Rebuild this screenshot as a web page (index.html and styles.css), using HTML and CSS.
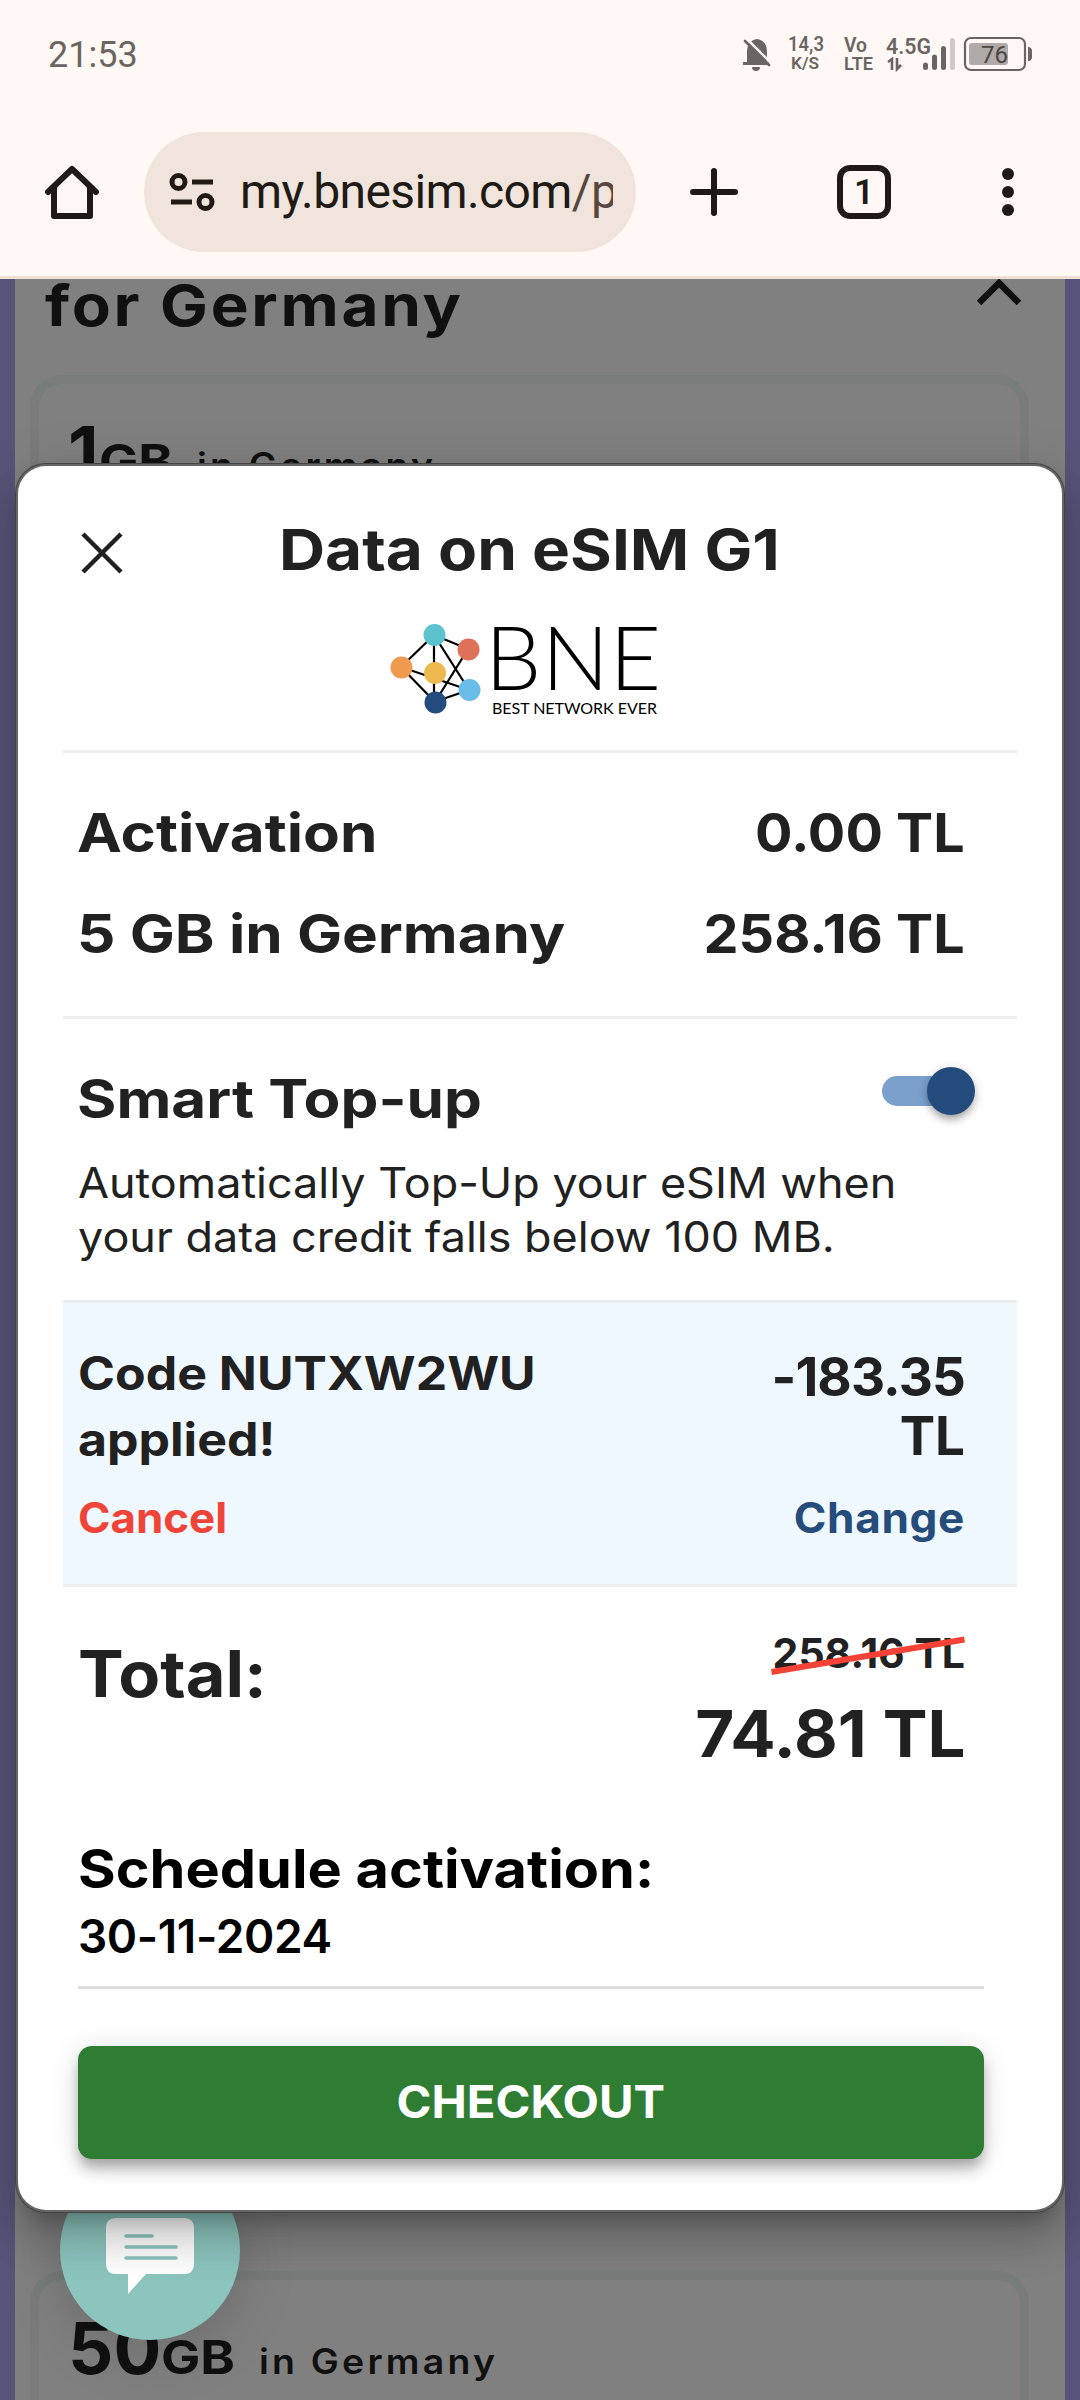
FILE: index.html
```html
<!DOCTYPE html>
<html lang="en">
<head>
  <meta charset="UTF-8">
  <title>Data on eSIM G1</title>
  <link rel="stylesheet" href="styles.css">
</head>
<body>

  <header class="phone-top">
    <div class="status-bar">
      <span class="clock">21:53</span>
      <svg class="status-icons" viewBox="736 30 304 48" width="304" height="48">
        <g fill="#6b6562">
          <path d="M747 63V52c0-8 4-12 10-13 7 1 10 6 10 13v11z"/>
          <path d="M743 62h26v3h-26zM752 67h8c0 3-2 4-4 4s-4-1-4-4z"/>
        </g>
        <path d="M747 39L771 63" stroke="#fff8f5" stroke-width="2.500"/>
        <path d="M745 41L769 65" stroke="#6b6562" stroke-width="2.600" stroke-linecap="round"/>
        <g class="tiny">
          <text x="788" y="51" font-size="21" textLength="36" lengthAdjust="spacingAndGlyphs">14,3</text>
          <text x="791" y="69" font-size="17" textLength="28" lengthAdjust="spacingAndGlyphs">K/S</text>
          <text x="844" y="52" font-size="20" textLength="23" lengthAdjust="spacingAndGlyphs">Vo</text>
          <text x="844" y="70" font-size="19" textLength="29" lengthAdjust="spacingAndGlyphs">LTE</text>
          <text x="886" y="54" font-size="22" textLength="45" lengthAdjust="spacingAndGlyphs">4.5G</text>
        </g>
        <path d="M888 62l4-3v11M897 58v11l4-4" fill="none" stroke="#6b6562" stroke-width="2.600"/>
        <g stroke="#6b6562" stroke-width="5" stroke-linecap="round">
          <path d="M925.500 65V67.500M934.500 57V67.500M943.500 48.500V67.500"/>
          <path d="M952.500 40.500V67.500" stroke="#d0cac7"/>
        </g>
        <rect x="965" y="38" width="60" height="32" rx="6" fill="none" stroke="#6b6562" stroke-width="2.200"/>
        <rect x="969" y="43" width="39" height="22" rx="3" fill="#b0aba8"/>
        <path d="M1028 47c3 0 4 2 4 4v6c0 2-1 4-4 4z" fill="#6b6562"/>
        <text class="level" x="981" y="63" textLength="27" lengthAdjust="spacingAndGlyphs">76</text>
      </svg>
    </div>
    <div class="toolbar">
      <svg class="home" viewBox="0 0 54 54" width="54" height="54">
        <path d="M3 27L27 4L51 27M9 22V51H45V22" fill="none" stroke="#201a17" stroke-width="6" stroke-linejoin="round" stroke-linecap="round"/>
      </svg>
      <div class="address">
        <svg class="tune" viewBox="0 0 46 38" width="46" height="38">
          <g fill="none" stroke="#201a17" stroke-width="5">
            <circle cx="9.500" cy="9" r="6.500"/>
            <circle cx="36.500" cy="29" r="6.500"/>
            <path d="M23 9H44M2 29H23"/>
          </g>
        </svg>
        <span class="url">my.bnesim.com<span class="url-path">/p</span></span>
      </div>
      <svg class="plus" viewBox="0 0 48 48" width="48" height="48">
        <path d="M24 3V45M3 24H45" stroke="#201a17" stroke-width="6" stroke-linecap="round"/>
      </svg>
      <div class="tabs">1</div>
      <svg class="dots" viewBox="0 0 12 48" width="12" height="48" fill="#201a17">
        <circle cx="6" cy="6" r="6"/><circle cx="6" cy="24" r="6"/><circle cx="6" cy="42" r="6"/>
      </svg>
    </div>
  </header>

  <main class="viewport">
    <div class="page">
      <div class="group-head">
        <span class="group-name">for Germany</span>
        <svg class="chevron" viewBox="0 0 46 30" width="46" height="30">
          <path d="M3 24L23 4L43 24" fill="none" stroke="#101010" stroke-width="6.500"/>
        </svg>
      </div>
      <div class="plan plan-first">
        <span class="amount">1</span><span class="unit">GB</span><span class="region">in Germany</span>
      </div>
      <div class="plan">
        <span class="amount">50</span><span class="unit">GB</span><span class="region">in Germany</span>
      </div>
    </div>

    <div class="chat">
      <svg viewBox="0 0 88 76" width="88" height="76">
        <path d="M10 0H78Q88 0 88 10V46Q88 56 78 56H40L22 76V56H10Q0 56 0 46V10Q0 0 10 0Z" fill="#fff"/>
        <path d="M20 18H46M20 29H70M20 40H70" stroke="#8cc5be" stroke-width="3.500" stroke-linecap="round"/>
      </svg>
    </div>

    <section class="dialog">
      <div class="dialog-head">
        <svg class="close" viewBox="0 0 42 42" width="42" height="42">
          <path d="M2 2L40 40M40 2L2 40" stroke="#202020" stroke-width="4.500"/>
        </svg>
        <h1>Data on eSIM G1</h1>
      </div>

      <svg class="logo" viewBox="0 0 320 130" width="320" height="130">
        <path d="M31 67L64 35L98 49L65 102L31 67L99 90L64 35V102L99 90" fill="none" stroke="#000" stroke-width="2.200"/>
        <circle cx="64.500" cy="35" r="11" fill="#5cc2cd"/>
        <circle cx="98.500" cy="49.500" r="11" fill="#df7059"/>
        <circle cx="31.500" cy="67.500" r="11" fill="#f09a50"/>
        <circle cx="65" cy="73" r="11" fill="#eeba50"/>
        <circle cx="99.500" cy="90" r="11" fill="#6abce9"/>
        <circle cx="65.500" cy="102.500" r="11" fill="#234b7d"/>
        <text class="logo-name" x="115" y="90" textLength="176">BNE</text>
        <text class="logo-tag" x="122" y="114" textLength="165">BEST NETWORK EVER</text>
      </svg>

      <div class="block items">
        <div class="row"><span class="label">Activation</span><span class="price">0.00 TL</span></div>
        <div class="row"><span class="label">5 GB in Germany</span><span class="price">258.16 TL</span></div>
      </div>

      <div class="block topup">
        <div class="topup-head">
          <span class="label">Smart Top-up</span>
          <span class="switch"><span class="thumb"></span></span>
        </div>
        <p>Automatically Top-Up your eSIM when<br>your data credit falls below 100 MB.</p>
      </div>

      <div class="block promo">
        <div class="promo-row">
          <span class="promo-code">Code NUTXW2WU<br>applied!</span>
          <span class="promo-value"><span class="discount">-183.35</span><br>TL</span>
        </div>
        <div class="promo-actions">
          <span class="cancel">Cancel</span>
          <span class="change">Change</span>
        </div>
      </div>

      <div class="block total">
        <span class="total-label">Total:</span>
        <div class="total-prices">
          <span class="old-price">258.16 TL
            <svg class="strike" viewBox="0 0 194 40" width="194" height="40">
              <path d="M0.500 36L193.500 3.500" stroke="#f44336" stroke-width="6"/>
            </svg>
          </span>
          <span class="new-price">74.81 TL</span>
        </div>
      </div>

      <div class="schedule">
        <div class="schedule-label">Schedule activation:</div>
        <div class="schedule-date">30-11-2024</div>
      </div>

      <button class="checkout"><span class="checkout-text">CHECKOUT</span></button>
    </section>
  </main>

</body>
</html>
```
FILE: styles.css
```css
* {
  box-sizing: border-box;
}
body {
  margin: 0;
  width: 1080px;
  height: 2400px;
  overflow: hidden;
  font-family: Inter, "Open Sans", sans-serif;
  color: #212121;
  white-space: nowrap;
}
svg {
  display: block;
  flex: none;
}

/* phone status bar + browser toolbar */
.phone-top {
  height: 279px;
  background: #fff8f5;
  border-bottom: 3px solid #f0dfd5;
  font-family: Roboto, sans-serif;
}
.status-bar {
  height: 108px;
  padding: 0 40px 0 48px;
  display: flex;
  align-items: center;
  justify-content: space-between;
}
.clock {
  margin-top: 2px;
  font-size: 36px;
  color: #6b6562;
}
.tiny {
  fill: #6b6562;
  font-weight: 600;
}
.level {
  fill: #4b4543;
  font-size: 24px;
}
.toolbar {
  height: 168px;
  padding: 0 66px 0 45px;
  display: flex;
  align-items: center;
}
.address {
  width: 492px;
  height: 120px;
  margin-left: 45px;
  padding-left: 25px;
  border-radius: 60px;
  background: #f0e4dc;
  display: flex;
  align-items: center;
}
.url {
  width: 373px;
  margin-left: 25px;
  overflow: hidden;
  font-size: 48px;
  line-height: 60px;
  letter-spacing: -0.6px;
  color: #201a17;
}
.url-path {
  color: #574740;
}
.plus {
  margin-left: 54px;
}
.tabs {
  width: 54px;
  height: 54px;
  margin-left: 99px;
  border: 6px solid #201a17;
  border-radius: 13px;
  font-size: 35px;
  font-weight: 600;
  line-height: 43px;
  text-align: center;
  color: #201a17;
}
.dots {
  margin-left: 111px;
}

/* dimmed page behind the dialog */
.viewport {
  position: relative;
  height: 2121px;
  overflow: hidden;
  background: #565478;
}
.page {
  height: 2121px;
  margin: 0 15px;
  padding: 0 36px 0 15px;
  background: #808080;
  color: #101010;
}
.group-head {
  height: 96px;
  padding: 0 7px 0 15px;
  display: flex;
  justify-content: space-between;
  font-size: 57px;
  font-weight: 700;
  line-height: 53px;
  letter-spacing: 2.4px;
}
.plan {
  height: 600px;
  padding: 25px 0 0 29px;
  border: 9px solid #787c7b;
  border-radius: 32px;
}
.plan-first {
  height: 1800px;
  margin-bottom: 96px;
}
.amount {
  font-size: 71px;
  font-weight: 700;
}
.unit {
  font-size: 46px;
  font-weight: 700;
}
.region {
  margin-left: 33px;
  font-size: 35px;
  font-weight: 600;
  letter-spacing: 3px;
}
.chat {
  position: absolute;
  left: 60px;
  top: 1881px;
  width: 180px;
  height: 180px;
  padding: 58px 0 0 46px;
  border-radius: 50%;
  background: #8cc5be;
  box-shadow: 0 12px 60px rgba(0, 0, 0, .16);
}

/* wide lettering */
.group-name,
.unit,
.region,
h1,
.label,
.promo-code,
.cancel,
.total-label,
.schedule-label,
.topup p {
  display: inline-block;
  transform-origin: left;
}
.group-name,
h1 {
  transform: scaleX(1.12);
}
.unit {
  transform: scaleX(1.14);
}
.label {
  transform: scaleX(1.135);
}
.promo-code,
.schedule-label {
  transform: scaleX(1.087);
}
.region,
.topup p,
.total-label {
  transform: scaleX(1.07);
}
.cancel {
  transform: scaleX(1.045);
}
.price,
.new-price,
.change {
  transform-origin: right;
  transform: scaleX(1.05);
}

/* dialog */
.dialog {
  position: absolute;
  left: 18px;
  top: 187px;
  width: 1044px;
  height: 1744px;
  padding: 34px 45px 0;
  border-radius: 28px;
  background: #fff;
  box-shadow: 0 0 0 2px #666, 0 0 0 3px #444, 0 18px 18px -9px rgba(0, 0, 0, .2), 0 30px 42px 3px rgba(0, 0, 0, .14), 0 12px 54px 9px rgba(0, 0, 0, .12);
}
.dialog-head {
  height: 100px;
  padding-left: 18px;
  display: flex;
  align-items: center;
}
.close {
  margin-top: 6px;
}
h1 {
  margin: 0 0 0 156px;
  font-size: 57px;
  font-weight: 700;
  line-height: 100px;
}
.logo {
  margin: 0 0 20px 307px;
}
.logo-name {
  font: 300 89px Lato, sans-serif;
}
.logo-tag {
  font: 400 16px Lato, sans-serif;
}
.block {
  padding: 0 52px 0 15px;
  border-top: 3px solid #eee;
}
.items {
  padding-top: 30px;
  padding-bottom: 31px;
}
.row {
  display: flex;
  justify-content: space-between;
  font-size: 53px;
  font-weight: 700;
  line-height: 101px;
}
.label {
  margin-left: -1px;
}
.topup {
  height: 284px;
  padding-top: 40px;
}
.topup-head {
  display: flex;
  justify-content: space-between;
  font-size: 53px;
  font-weight: 700;
  line-height: 80px;
}
.switch {
  width: 84px;
  height: 30px;
  margin: 17px -1px 0 0;
  border-radius: 15px;
  background: #7ba0cc;
}
.thumb {
  display: block;
  width: 48px;
  height: 48px;
  margin: -9px 0 0 45px;
  border-radius: 50%;
  background: #234c7d;
  box-shadow: 0 6px 9px -3px rgba(0, 0, 0, .3), 0 3px 12px rgba(0, 0, 0, .2);
}
.topup p {
  margin: 17px 0 0;
  font-size: 42px;
  line-height: 54px;
}
.promo {
  height: 284px;
  padding-top: 37px;
  background: #eff7ff;
}
.promo-row,
.promo-actions {
  display: flex;
  justify-content: space-between;
  font-weight: 700;
}
.promo-code {
  font-size: 46px;
  line-height: 66px;
}
.promo-value {
  margin-top: 8px;
  font-size: 53px;
  line-height: 59px;
  text-align: right;
}
.discount {
  letter-spacing: -0.9px;
}
.promo-actions {
  margin-top: 20px;
  font-size: 42px;
  line-height: 52px;
}
.cancel {
  color: #f04438;
}
.change {
  color: #264c7c;
  letter-spacing: .6px;
}
.total {
  height: 242px;
  padding-top: 47px;
  display: flex;
  justify-content: space-between;
  font-weight: 700;
}
.total-label {
  font-size: 64px;
  line-height: 80px;
}
.total-prices {
  display: flex;
  flex-direction: column;
  align-items: flex-end;
}
.old-price {
  position: relative;
  font-size: 41px;
  font-weight: 700;
  line-height: 38px;
}
.strike {
  position: absolute;
  right: 0;
  top: 2px;
}
.new-price {
  margin-top: 22px;
  font-size: 64px;
  line-height: 80px;
}
.schedule {
  height: 163px;
  margin: 0 33px 0 15px;
  padding-top: 13px;
  border-bottom: 3px solid #dedede;
  color: #000;
}
.schedule-label {
  font-size: 53px;
  font-weight: 700;
  line-height: 60px;
}
.schedule-date {
  font-size: 46px;
  font-weight: 600;
  line-height: 74px;
  letter-spacing: -.4px;
}
.checkout {
  display: block;
  width: 906px;
  height: 113px;
  margin: 57px 0 0 15px;
  padding: 0 0 3px;
  border: 0;
  border-radius: 14px;
  background: #2f7d32;
  color: #fff;
  font: 700 45px Inter, sans-serif;
  box-shadow: 0 9px 12px -3px rgba(0, 0, 0, .2), 0 12px 15px rgba(0, 0, 0, .14), 0 3px 30px rgba(0, 0, 0, .12);
}
.checkout-text {
  display: inline-block;
  transform: scaleX(1.05);
}
```
